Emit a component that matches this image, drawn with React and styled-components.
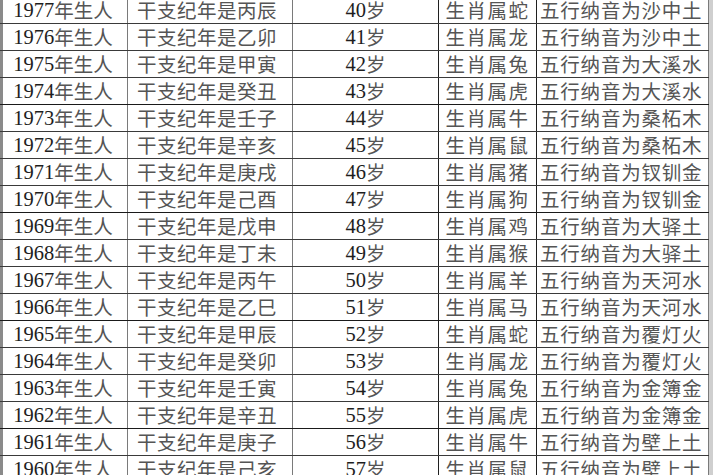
import React from "react";
import styled, { createGlobalStyle } from "styled-components";

const Global = createGlobalStyle`
  html, body { margin: 0; padding: 0; background: #cfcfcf; }
  body { width: 713px; height: 475px; overflow: hidden; }
`;

const Sheet = styled.div`
  width: 709px;
  margin-top: -3px;
  background: #fff;
  border-left: 3px solid #8a8a8a;
  box-sizing: border-box;
  font-family: "Liberation Serif", "Noto Sans CJK SC", serif;
`;

const Row = styled.div`
  display: grid;
  grid-template-columns: 125px 165px 146px 98px 172px;
  height: 27px;
  box-sizing: border-box;
  border-bottom: 1px solid ${(p) => (p.$heavy ? "#1a1a1a" : "#3a3a3a")};
  margin-left: -3px;
  padding-left: 3px;
`;

const Cell = styled.div`
  box-sizing: border-box;
  border-right: 1px solid ${(p) => (p.$dark ? "#202020" : "#7a7a7a")};
  display: flex;
  align-items: center;
  justify-content: ${(p) => (p.$align === "left" ? "flex-start" : "center")};
  padding-left: ${(p) => p.$pad || 0}px;
  padding-right: ${(p) => p.$padr || 0}px;
  font-size: 20px;
  line-height: 20px;
  white-space: nowrap;
`;

const Num = styled.span`
  font-family: "Liberation Serif", serif;
  color: #1e1e1e;
  font-size: 20.5px;
  line-height: 20px;
`;

const Han = styled.span`
  font-family: "Noto Sans CJK SC", sans-serif;
  color: #555;
  font-weight: 400;
  font-size: ${(p) => p.$size || 19.5}px;
  line-height: 20px;
  letter-spacing: ${(p) => p.$ls ?? 0.5}px;
`;

const data = [
  ["1977", "丙辰", "40", "蛇", "沙中土"],
  ["1976", "乙卯", "41", "龙", "沙中土"],
  ["1975", "甲寅", "42", "兔", "大溪水"],
  ["1974", "癸丑", "43", "虎", "大溪水"],
  ["1973", "壬子", "44", "牛", "桑柘木"],
  ["1972", "辛亥", "45", "鼠", "桑柘木"],
  ["1971", "庚戌", "46", "猪", "钗钏金"],
  ["1970", "己酉", "47", "狗", "钗钏金"],
  ["1969", "戊申", "48", "鸡", "大驿土"],
  ["1968", "丁未", "49", "猴", "大驿土"],
  ["1967", "丙午", "50", "羊", "天河水"],
  ["1966", "乙巳", "51", "马", "天河水"],
  ["1965", "甲辰", "52", "蛇", "覆灯火"],
  ["1964", "癸卯", "53", "龙", "覆灯火"],
  ["1963", "壬寅", "54", "兔", "金簿金"],
  ["1962", "辛丑", "55", "虎", "金簿金"],
  ["1961", "庚子", "56", "牛", "壁上土"],
  ["1960", "己亥", "57", "鼠", "壁上土"],
];

export default function App() {
  return (
    <>
      <Global />
      <Sheet>
        {data.map(([year, gz, age, sx, wx], i) => (
          <Row key={year} $heavy={i % 4 === 3}>
            <Cell $padr={4}>
              <Num>{year}</Num>
              <Han $ls={0}>年生人</Han>
            </Cell>
            <Cell $align="left" $pad={9}>
              <Han>{"干支纪年是" + gz}</Han>
            </Cell>
            <Cell $dark>
              <Num>{age}</Num>
              <Han $ls={0}>岁</Han>
            </Cell>
            <Cell $dark>
              <Han $ls={1.5}>{"生肖属" + sx}</Han>
            </Cell>
            <Cell $align="left" $pad={3}>
              <Han $ls={0.8}>{"五行纳音为" + wx}</Han>
            </Cell>
          </Row>
        ))}
      </Sheet>
    </>
  );
}
